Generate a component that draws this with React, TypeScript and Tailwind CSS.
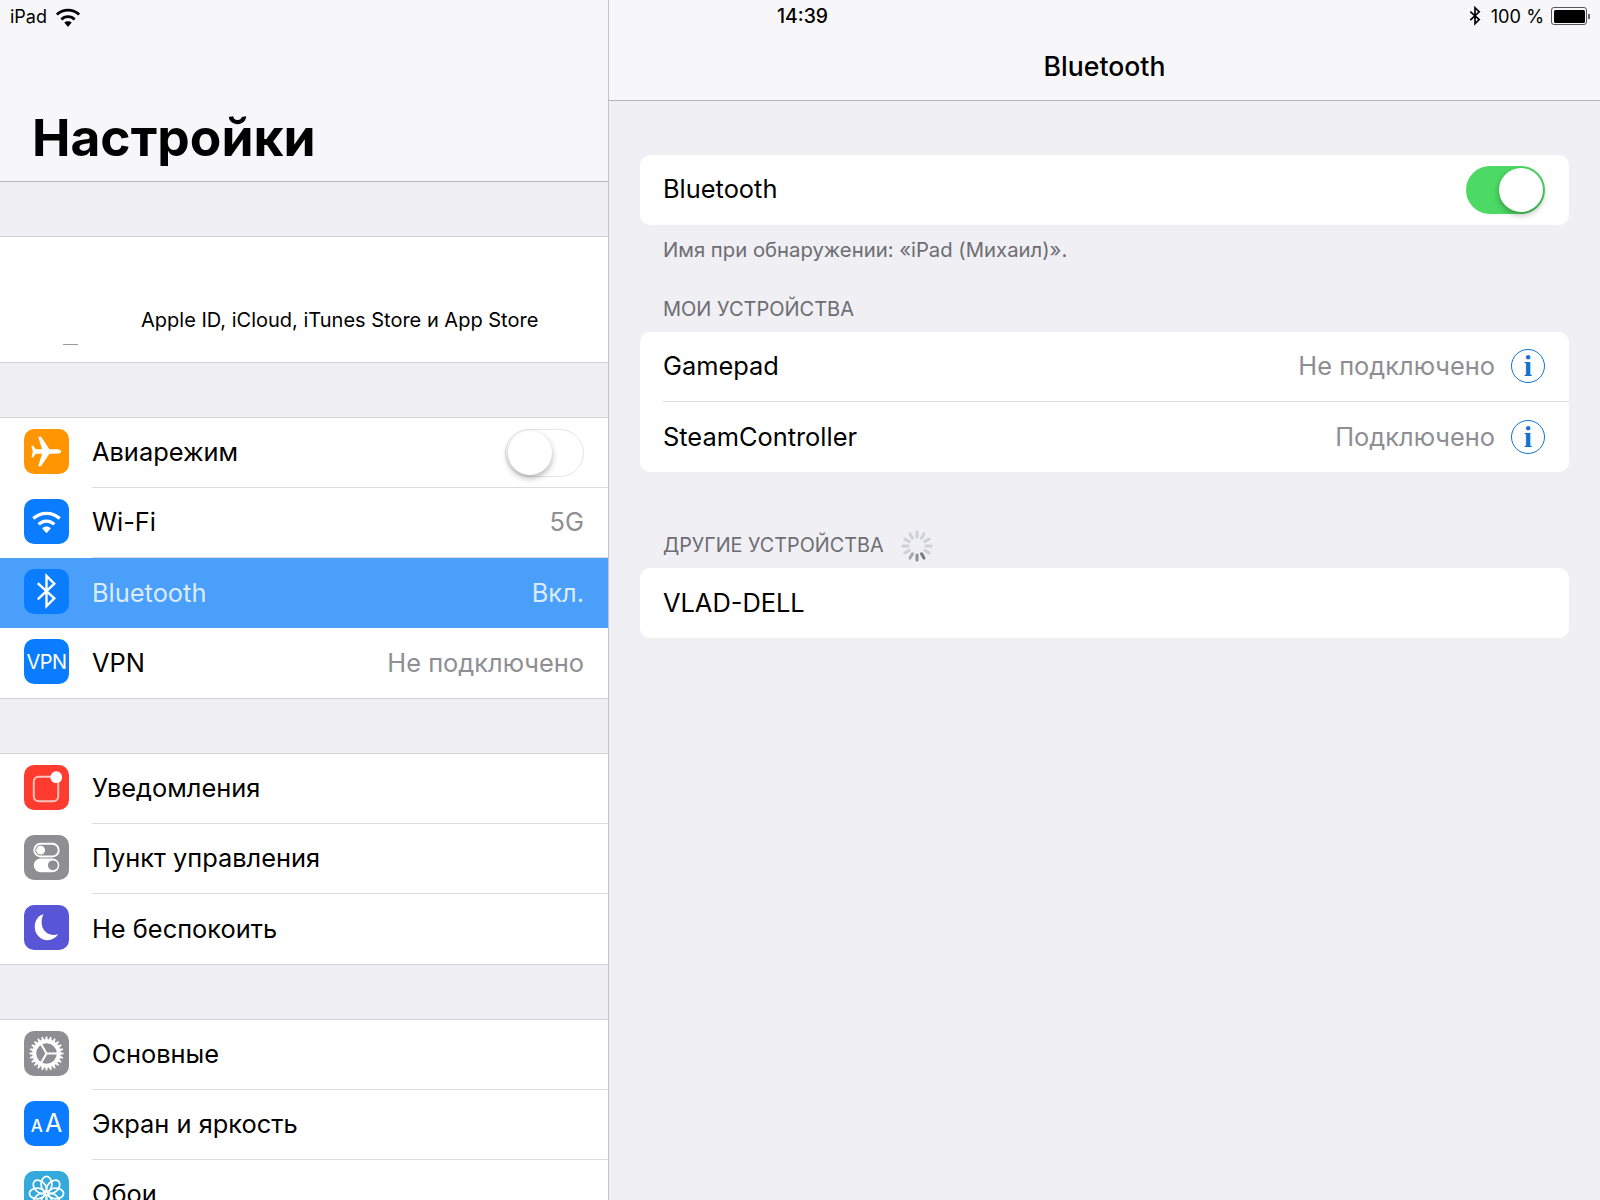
import React from "react";

const font = { fontFamily: "Inter, 'Liberation Sans', sans-serif" };

function Box({ bg, children }: { bg: string; children?: React.ReactNode }) {
  return (
    <div className={`mb-[3px] flex h-[45px] w-[45px] shrink-0 items-center justify-center overflow-hidden rounded-[10px] ${bg}`}>
      {children}
    </div>
  );
}

const Svg = ({ children }: { children: React.ReactNode }) => (
  <svg width="45" height="45" viewBox="0 0 46 46">{children}</svg>
);

const Plane = () => (
  <Svg>
    <path fill="#fff" d="M38 23C38 21.4 35 20.8 33 20.8L26 20.8 17.5 8 14.5 8 18.500 20.8 12 20.8 9.500 17 7.500 17 9 23 7.500 29 9.500 29 12 25.2 18.500 25.2 14.500 38 17.500 38 26 25.2 33 25.2C35 25.2 38 24.600 38 23Z" />
  </Svg>
);

const WifiGlyph = ({ color, w = 45 }: { color: string; w?: number }) => (
  <svg width={w} height={w} viewBox="0 0 46 46">
    <path fill="none" stroke={color} strokeWidth="3.4" d="M9.500 20C17 13 29 13 36.500 20" />
    <path fill="none" stroke={color} strokeWidth="3.4" d="M15 26C19.500 21.500 26.500 21.500 31 26" />
    <path fill={color} d="M18.500 29.800C21 27.600 25 27.600 27.500 29.800L23 35Z" />
  </svg>
);

const BtGlyph = ({ color, size = 45, sw = 2.4 }: { color: string; size?: number; sw?: number }) => (
  <svg width={size} height={size} viewBox="0 0 46 46">
    <path fill="none" stroke={color} strokeWidth={sw} d="M14 14.500L31 30 23 38V7L31 15 14 31" />
  </svg>
);

const Notif = () => (
  <Svg>
    <path fill="none" stroke="#ffc5c0" strokeWidth="2" d="M30 12H15a5 5 0 0 0-5 5v15a5 5 0 0 0 5 5h15a5 5 0 0 0 5-5V17" />
    <circle cx="33" cy="12.500" r="6" fill="#fff" />
  </Svg>
);

const Controls = () => (
  <Svg>
    <rect x="10.500" y="9" width="25" height="13" rx="6.500" fill="none" stroke="#fff" strokeWidth="2" />
    <circle cx="17" cy="15.500" r="4.500" fill="#fff" />
    <rect x="10" y="24" width="26" height="14" rx="7" fill="#fff" />
    <circle cx="29.500" cy="31" r="5" fill="#8e8e93" />
  </Svg>
);

const Moon = () => (
  <Svg>
    <path fill="#fff" d="M20 9.500C13.500 11 11 17 11 22.500 11 30 17 36 24 36c4.500 0 8.500-2.200 11-6-8 2.500-15-2-16.500-8.500C17.500 17 18 13 20 9.500Z" />
  </Svg>
);

const Gear = () => (
  <Svg>
    {Array.from({ length: 24 }).map((_, i) => (
      <path key={i} fill="#fff" d="M21.400 10L22.300 5.500H23.700L24.600 10Z" transform={`rotate(${i * 15} 23 23)`} />
    ))}
    <circle cx="23" cy="23" r="12.500" fill="none" stroke="#fff" strokeWidth="4" />
    <path stroke="#fff" strokeWidth="2.200" d="M23 23H36M23 23L16.500 11.700M23 23L16.500 34.300" />
  </Svg>
);

const Flower = () => (
  <Svg>
    {Array.from({ length: 8 }).map((_, i) => (
      <ellipse key={i} cx="23" cy="13.500" rx="5.500" ry="8" fill="none" stroke="#fff" strokeWidth="1.800" transform={`rotate(${i * 45} 23 23)`} />
    ))}
  </Svg>
);

function Toggle({ on }: { on: boolean }) {
  return (
    <div
      className={`flex h-[48px] w-[79px] shrink-0 items-center rounded-full p-[2px] ${
        on ? "justify-end bg-[#4cd964]" : "justify-start border border-[#e5e5e5] bg-white"
      }`}
    >
      <div className="h-[44px] w-[44px] rounded-full bg-white shadow-[0_3px_6px_rgba(0,0,0,0.3)]" />
    </div>
  );
}

type RowT = {
  icon: React.ReactNode;
  label: string;
  value?: string;
  toggle?: boolean;
  active?: boolean;
  last?: boolean;
};

function Row({ icon, label, value, toggle, active, last }: RowT) {
  return (
    <div className={`flex h-[70px] items-center pl-6 ${active ? "bg-[#4a9ffa]" : "bg-white"}`}>
      {icon}
      <div
        className={`ml-[23px] flex h-full min-w-0 flex-1 items-center justify-between pr-6 ${
          last || active ? "" : "border-b border-[#dcdce0]"
        }`}
      >
        <span className={`text-[25.4px] ${active ? "text-[#dcecff]" : "text-black"}`}>{label}</span>
        {toggle ? <Toggle on={false} /> : null}
        {value ? <span className={`text-[25.4px] ${active ? "text-[#dcecff]" : "text-[#8e8e93]"}`}>{value}</span> : null}
      </div>
    </div>
  );
}

function Info() {
  return (
    <span
      className="flex h-[34px] w-[34px] items-center justify-center rounded-full border-[1.5px] border-[#1273cf] text-[30px] font-bold leading-none text-[#1273cf]"
      style={{ fontFamily: "'Liberation Serif', serif" }}
    >
      i
    </span>
  );
}

function Device({ name, status, border }: { name: string; status?: string; border?: boolean }) {
  return (
    <div className={`flex h-[70px] items-center justify-between pr-[24px] ${border ? "border-b border-[#dcdce0]" : ""}`}>
      <span className="text-[25.4px] text-black">{name}</span>
      {status ? (
        <div className="flex items-center gap-[16px]">
          <span className="text-[25.4px] text-[#8e8e93]">{status}</span>
          <Info />
        </div>
      ) : null}
    </div>
  );
}

function Spinner() {
  return (
    <svg width="34" height="34" viewBox="0 0 34 34">
      {Array.from({ length: 12 }).map((_, i) => (
        <rect
          key={i}
          x="15.500"
          y="1.500"
          width="3"
          height="8"
          rx="1.500"
          fill={i === 5 ? "#77787d" : i === 6 ? "#8f9095" : i === 7 ? "#a8a9ae" : "#cfd0d5"}
          transform={`rotate(${i * 30} 17 17)`}
        />
      ))}
    </svg>
  );
}

export default function App() {
  return (
    <div className="relative flex h-[1200px] w-[1600px] overflow-hidden bg-[#efeff4]" style={font}>
      <div className="absolute inset-x-0 top-0 flex h-[33px] items-center justify-between px-[10px] text-[18px] text-black">
        <div className="flex items-center gap-[2px]">
          <span>iPad</span>
          <div className="-my-3">
            <WifiGlyph color="#000" w={38} />
          </div>
        </div>
        <span className="absolute left-[777px] text-[19.4px] font-medium">14:39</span>
        <div className="flex items-center gap-[2px]">
          <BtGlyph color="#000" size={24} sw={3.2} />
          <span className="ml-[2px] text-[18.2px]">100 %</span>
          <div className="ml-[5px] flex h-[18px] w-[36px] items-center rounded-[3px] border border-[#555] p-[1.5px]">
            <div className="h-full w-full rounded-[1.5px] bg-black" />
          </div>
          <div className="-ml-[1px] h-[5px] w-[2px] bg-[#666]" />
        </div>
      </div>

      <aside className="flex w-[609px] shrink-0 flex-col border-r border-[#c4c4c8]">
        <header className="flex h-[182px] shrink-0 items-end border-b border-[#b5b5b8] bg-[#f7f7f9] pb-[9px] pl-[32px]">
          <h1 className="text-[51.500px] font-bold leading-[70px] text-black">Настройки</h1>
        </header>
        <div className="h-[54px] shrink-0" />
        <div className="relative h-[127px] shrink-0 border-y border-[#d2d2d6] bg-white pl-[141px] pt-[70px]">
          <p className="text-[20px] leading-[26px] text-black">Apple ID, iCloud, iTunes Store и App Store</p>
          <div className="absolute left-[63px] top-[107px] h-px w-[15px] bg-[#9a9a9a]" />
        </div>
        <div className="h-[54px] shrink-0" />
        <div className="shrink-0 border-y border-[#d2d2d6]">
          <Row icon={<Box bg="bg-[#ff9500]"><Plane /></Box>} label="Авиарежим" toggle />
          <Row icon={<Box bg="bg-[#0a7cff]"><WifiGlyph color="#fff" /></Box>} label="Wi-Fi" value="5G" />
          <Row icon={<Box bg="bg-[#0a7cff]"><BtGlyph color="#fff" /></Box>} label="Bluetooth" value="Вкл." active />
          <Row
            icon={<Box bg="bg-[#0a7cff]"><span className="text-[20px] tracking-tight text-white">VPN</span></Box>}
            label="VPN"
            value="Не подключено"
            last
          />
        </div>
        <div className="h-[54px] shrink-0" />
        <div className="shrink-0 border-y border-[#d2d2d6]">
          <Row icon={<Box bg="bg-[#ff3b30]"><Notif /></Box>} label="Уведомления" />
          <Row icon={<Box bg="bg-[#8e8e93]"><Controls /></Box>} label="Пункт управления" />
          <Row icon={<Box bg="bg-[#5856d6]"><Moon /></Box>} label="Не беспокоить" last />
        </div>
        <div className="h-[54px] shrink-0" />
        <div className="shrink-0 border-t border-[#d2d2d6]">
          <Row icon={<Box bg="bg-[#8e8e93]"><Gear /></Box>} label="Основные" />
          <Row
            icon={
              <Box bg="bg-[#0a7cff]">
                <span className="flex items-baseline gap-[2px] text-white">
                  <span className="text-[17px] font-medium">A</span>
                  <span className="text-[25px]">A</span>
                </span>
              </Box>
            }
            label="Экран и яркость"
          />
          <Row icon={<Box bg="bg-[#34aadc]"><Flower /></Box>} label="Обои" />
        </div>
      </aside>

      <main className="flex min-w-0 flex-1 flex-col">
        <header className="flex h-[101px] shrink-0 items-end justify-center border-b border-[#b5b5b8] bg-[#f7f7f9] pb-[18px]">
          <h2 className="text-[26.6px] font-medium leading-[32px] text-black">Bluetooth</h2>
        </header>
        <div className="flex flex-col px-[31px] pt-[54px]">
          <div className="flex h-[70px] items-center justify-between rounded-[10px] bg-white pl-[23px] pr-[24px]">
            <span className="pb-[2px] text-[25.4px] text-black">Bluetooth</span>
            <Toggle on />
          </div>
          <p className="pl-[23px] pt-[12px] text-[20.3px] leading-[26px] text-[#6d6d72]">
            Имя при обнаружении: «iPad (Михаил)».
          </p>
          <p className="pl-[23px] pt-[33px] text-[20px] leading-[26px] text-[#6d6d72]">МОИ УСТРОЙСТВА</p>
          <div className="mt-[10px] rounded-[10px] bg-white pl-[23px]">
            <Device name="Gamepad" status="Не подключено" border />
            <Device name="SteamController" status="Подключено" />
          </div>
          <div className="mt-[57px] flex h-[34px] items-center gap-[16px] pl-[23px] text-[19.8px] text-[#6d6d72]">
            <span>ДРУГИЕ УСТРОЙСТВА</span>
            <Spinner />
          </div>
          <div className="mt-[5px] rounded-[10px] bg-white pl-[23px]">
            <Device name="VLAD-DELL" />
          </div>
        </div>
      </main>
    </div>
  );
}
